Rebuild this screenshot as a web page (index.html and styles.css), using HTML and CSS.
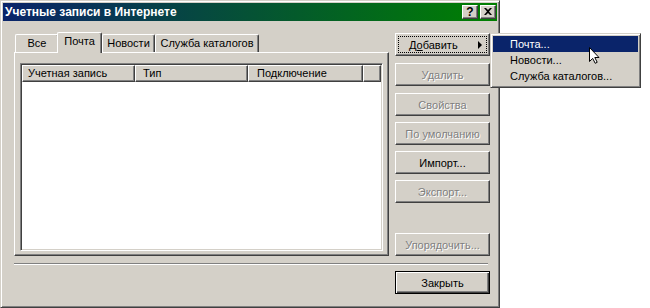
FILE: index.html
```html
<!DOCTYPE html>
<html lang="ru">
<head>
<meta charset="utf-8">
<title>Учетные записи в Интернете</title>
<link rel="stylesheet" href="styles.css">
</head>
<body>
<div class="window">
  <div class="titlebar">
    <span class="title">Учетные записи в Интернете</span>
    <div class="tb-btns">
      <span class="tb-btn">?</span>
      <span class="tb-btn"><svg width="8" height="7" viewBox="0 0 8 7"><path d="M0 0h2l2 2 2-2h2L5 3.5 8 7H6L4 5 2 7H0l3-3.5z" fill="#000"/></svg></span>
    </div>
  </div>
  <div class="content">
    <div class="main">
      <div class="left">
        <div class="tabs">
          <div class="tab t-all">Все</div>
          <div class="tab sel t-mail">Почта</div>
          <div class="tab t-news">Новости</div>
          <div class="tab t-dir">Служба каталогов</div>
        </div>
        <div class="panel">
          <div class="list">
            <div class="header">
              <div class="hcell c1">Учетная запись</div>
              <div class="hcell c2">Тип</div>
              <div class="hcell c3">Подключение</div>
              <div class="hcell filler"></div>
            </div>
          </div>
        </div>
      </div>
      <div class="right">
        <div class="btn focus add"><span class="add-label">Д<u>о</u>бавить</span><span class="arrow"></span></div>
        <div class="btn dis gap7">Удалить</div>
        <div class="btn dis gap7">Свойства</div>
        <div class="btn dis gap6">По умолчанию</div>
        <div class="btn gap6">Импорт...</div>
        <div class="btn dis gap6">Экспорт...</div>
        <div class="btn dis bottom">Упорядочить...</div>
      </div>
    </div>
    <div class="sep"></div>
    <div class="footer">
      <div class="btn default">Закрыть</div>
    </div>
  </div>
</div>
<div class="menu">
  <div class="item hi">Почта...</div>
  <div class="item">Новости...</div>
  <div class="item">Служба каталогов...</div>
</div>
<svg class="cursor" width="11" height="17" viewBox="0 0 11 17"><path d="M0.5 0.5V14.5L3.7 11.4L6.2 16.3L8.2 15.3L5.8 10.5H10Z" fill="#fff" stroke="#000" stroke-width="1" stroke-linejoin="miter"/></svg>
</body>
</html>
```

FILE: styles.css
```css
html, body {
  margin: 0;
  padding: 0;
  background: #fff;
}
body {
  font: 11px "Liberation Sans", Arial, sans-serif;
  color: #000;
  position: relative;
  width: 650px;
  height: 308px;
  overflow: hidden;
}
.window {
  width: 500px;
  height: 308px;
  box-sizing: border-box;
  background: #d4d0c8;
  border: 1px solid;
  border-color: #d4d0c8 #404040 #404040 #d4d0c8;
  box-shadow: inset 1px 1px #fff, inset -1px -1px #808080;
  padding: 2px;
  display: flex;
  flex-direction: column;
}
.titlebar {
  height: 18px;
  flex: none;
  background: linear-gradient(to right, #0a246a, #008000);
  display: flex;
  align-items: center;
  justify-content: space-between;
  padding: 0 1px 0 2px;
  color: #fff;
  font-weight: bold;
  font-size: 12px;
}
.title {
  white-space: nowrap;
}
.tb-btns {
  display: flex;
  gap: 2px;
}
.tb-btn {
  width: 16px;
  height: 14px;
  box-sizing: border-box;
  background: #d4d0c8;
  border: 1px solid;
  border-color: #fff #404040 #404040 #fff;
  box-shadow: inset -1px -1px #808080;
  display: flex;
  align-items: center;
  justify-content: center;
  color: #000;
  font-weight: bold;
  font-size: 12px;
  line-height: 12px;
  padding-bottom: 1px;
}
.content {
  flex: 1;
  display: flex;
  flex-direction: column;
  padding: 11px 7px 0 11px;
}
.main {
  display: flex;
  gap: 6px;
  height: 224px;
}
.left {
  width: 375px;
  display: flex;
  flex-direction: column;
}
.tabs {
  height: 20px;
  display: flex;
  align-items: flex-end;
  padding-left: 1px;
  flex: none;
}
.tab {
  height: 18px;
  box-sizing: border-box;
  border-top: 1px solid #fff;
  border-left: 1px solid #fff;
  border-right: 1px solid #404040;
  box-shadow: inset -1px 0 #808080;
  border-radius: 2px 2px 0 0;
  background: #d4d0c8;
  text-align: center;
  line-height: 16px;
  white-space: nowrap;
}
.t-all { width: 44px; margin-right: -2px; }
.t-mail { width: 45px; }
.t-news { width: 53px; }
.t-dir { width: 104px; }
.tab.sel {
  height: 21px;
  margin-bottom: -1px;
  position: relative;
  z-index: 1;
  line-height: 16px;
}
.panel {
  flex: 1;
  border: 1px solid;
  border-color: #fff #404040 #404040 #fff;
  box-shadow: inset -1px -1px #808080;
  padding: 10px 5px 4px 5px;
  display: flex;
  flex-direction: column;
}
.list {
  flex: 1;
  border: 1px solid;
  border-color: #808080 #fff #fff #808080;
  box-shadow: inset 1px 1px #404040, inset -1px -1px #d4d0c8;
  padding: 1px;
  background: #fff;
}
.header {
  display: flex;
  height: 17px;
  background: #d4d0c8;
}
.hcell {
  box-sizing: border-box;
  border: 1px solid;
  border-color: #fff #404040 #404040 #fff;
  box-shadow: inset -1px -1px #808080;
  padding-left: 5px;
  line-height: 14px;
  white-space: nowrap;
}
.c1 { width: 113px; }
.c2 { width: 113px; padding-left: 7px; }
.c3 { width: 115px; padding-left: 8px; }
.filler { flex: 1; }
.right {
  width: 95px;
  display: flex;
  flex-direction: column;
  padding-top: 1px;
}
.btn {
  height: 23px;
  box-sizing: border-box;
  border: 1px solid;
  border-color: #fff #404040 #404040 #fff;
  box-shadow: inset -1px -1px #808080;
  background: #d4d0c8;
  display: flex;
  align-items: center;
  justify-content: center;
  white-space: nowrap;
  position: relative;
  flex: none;
}
.gap7 { margin-top: 7px; }
.gap6 { margin-top: 6px; }
.bottom { margin-top: auto; }
.dis {
  color: #808080;
  text-shadow: 1px 1px #fff;
}
.add {
  justify-content: flex-start;
  padding-left: 13px;
}
.add::after {
  content: "";
  position: absolute;
  left: 2px;
  top: 2px;
  right: 2px;
  bottom: 2px;
  border: 1px dotted #000;
}
.add-label u {
  text-decoration: underline;
}
.arrow {
  position: absolute;
  right: 7px;
  top: 7px;
  width: 0;
  height: 0;
  border-left: 4px solid #000;
  border-top: 4px solid transparent;
  border-bottom: 4px solid transparent;
}
.sep {
  margin-top: 7px;
  width: 474px;
  height: 2px;
  box-sizing: border-box;
  border-top: 1px solid #808080;
  border-bottom: 1px solid #fff;
}
.footer {
  display: flex;
  justify-content: flex-end;
  margin-top: 6px;
}
.footer .btn {
  width: 95px;
}
.btn.default {
  border: 1px solid #000;
  box-shadow: inset 1px 1px #fff, inset -1px -1px #404040, inset -2px -2px #808080;
}
.menu {
  position: absolute;
  left: 490px;
  top: 33px;
  width: 151px;
  height: 55px;
  box-sizing: border-box;
  background: #d4d0c8;
  border: 1px solid;
  border-color: #d4d0c8 #404040 #404040 #d4d0c8;
  box-shadow: inset 1px 1px #fff, inset -1px -1px #808080;
  padding: 2px;
}
.item {
  height: 16px;
  line-height: 16px;
  padding-left: 17px;
  white-space: nowrap;
}
.item.hi {
  background: #0a246a;
  color: #fff;
}
.cursor {
  position: absolute;
  left: 589px;
  top: 47px;
}
```
